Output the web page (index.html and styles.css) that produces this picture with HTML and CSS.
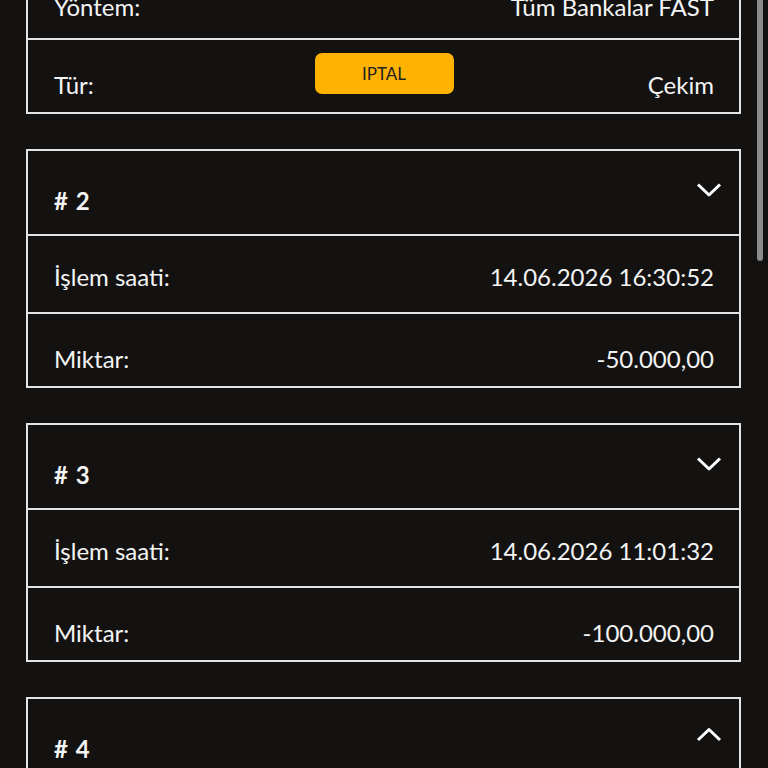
FILE: index.html
```html
<!DOCTYPE html>
<html lang="tr">
<head>
    <meta charset="UTF-8">
    <title>İşlem geçmişi</title>
    <link rel="stylesheet" href="styles.css">
</head>
<body>
<div id="page">
    <div id="list">
        <div class="card">
            <div class="row row-method">
                <span class="label">Yöntem:</span>
                <span class="value">Tüm Bankalar FAST</span>
            </div>
            <div class="row row-status">
                <span class="label">Tür:</span>
                <span class="badge">IPTAL</span>
                <span class="value">Çekim</span>
            </div>
        </div>

        <div class="card">
            <div class="card-head">
                <span class="title"># 2</span>
                <svg class="chevron" width="28" height="22" viewBox="0 0 28 22"><polyline points="3,5.5 14,16 25,5.5"/></svg>
            </div>
            <div class="row">
                <span class="label">İşlem saati:</span>
                <span class="value">14.06.2026 16:30:52</span>
            </div>
            <div class="row row-last">
                <span class="label">Miktar:</span>
                <span class="value">-50.000,00</span>
            </div>
        </div>

        <div class="card">
            <div class="card-head">
                <span class="title"># 3</span>
                <svg class="chevron" width="28" height="22" viewBox="0 0 28 22"><polyline points="3,5.5 14,16 25,5.5"/></svg>
            </div>
            <div class="row">
                <span class="label">İşlem saati:</span>
                <span class="value">14.06.2026 11:01:32</span>
            </div>
            <div class="row row-last">
                <span class="label">Miktar:</span>
                <span class="value">-100.000,00</span>
            </div>
        </div>

        <div class="card">
            <div class="card-head">
                <span class="title"># 4</span>
                <svg class="chevron" width="28" height="22" viewBox="0 0 28 22"><polyline points="3,13 14,2.5 25,13"/></svg>
            </div>
        </div>
    </div>
    <div id="scroll-thumb"></div>
</div>
</body>
</html>
```

FILE: styles.css
```css
*{
    margin: 0;
    padding: 0;
    box-sizing: border-box;
}
body{
    background: #131211;
    color: #f4f4f4;
    font-family: Lato, "Noto Sans", sans-serif;
    font-size: 24px;
    line-height: 28px;
}
#page{
    height: 768px;
    overflow: hidden;
    position: relative;
}
#list{
    margin-top: -40px;
    padding: 0 27px 0 26px;
    display: flex;
    flex-direction: column;
    gap: 35px;
}
.card{
    border: 2px solid #e4e4e4;
}
.card-head{
    display: flex;
    justify-content: space-between;
    align-items: flex-start;
    padding: 28px 16px 19px 26px;
    border-bottom: 2px solid #e4e4e4;
}
.card-head .title{
    margin-top: 8px;
    font-weight: 700;
    word-spacing: 2px;
}
.chevron{
    display: block;
    fill: none;
    stroke: #fff;
    stroke-width: 3;
    stroke-linejoin: round;
}
.row{
    display: grid;
    grid-template-columns: 1fr auto 1fr;
    align-items: end;
    padding: 27px 25px 21px 26px;
}
.row + .row{
    border-top: 2px solid #e4e4e4;
}
.row .value{
    grid-column: 3;
    justify-self: end;
    white-space: nowrap;
}
.row-last{
    padding: 31px 25px 13px 26px;
}
.row-method{
    padding: 31px 25px 17px 26px;
}
.row-status{
    padding: 13px 25px 13px 26px;
}
.badge{
    grid-column: 2;
    align-self: start;
    width: 139px;
    height: 41px;
    margin-bottom: 5px;
    border-radius: 7px;
    background: #ffb300;
    color: #222;
    font-size: 17px;
    line-height: 41px;
    text-align: center;
}
#scroll-thumb{
    position: absolute;
    top: 0;
    right: 5px;
    width: 6px;
    height: 261px;
    border-radius: 0 0 3px 3px;
    background: #8c8c8c;
}
```
